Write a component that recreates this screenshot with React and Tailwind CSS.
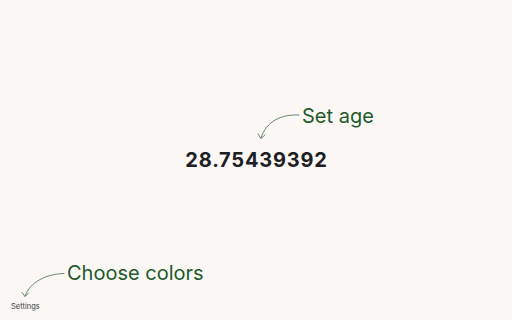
export default function App() {
  return (
    <div
      className="relative w-[512px] h-[320px] overflow-hidden bg-[#faf7f4] flex items-center justify-center"
      style={{ fontFamily: "Inter, 'Noto Sans', sans-serif" }}
    >
      <div className="text-[20px] leading-none font-bold tracking-[0.04em] text-[#1d2125] pl-[1px]">
        28.75439392
      </div>

      {/* annotation arrows */}
      <svg className="absolute inset-0 pointer-events-none" width="512" height="320" fill="none">
        <g stroke="#5b7a62" strokeWidth="0.9" strokeLinecap="round">
          <path d="M299 115 C 282 114, 266 121, 261 138" />
          <path d="M258 134 L261 138.5 L265 135" />
          <path d="M64 273.5 C 46 274, 30 282, 25 296" />
          <path d="M22 292.5 L25 296.5 L28.5 293" />
        </g>
      </svg>

      <div className="absolute left-[302px] top-[104px] text-[20px] leading-6 text-[#1e5a2c]">
        Set age
      </div>
      <div className="absolute left-[67px] top-[261px] text-[20px] leading-6 text-[#1e5a2c]">
        Choose colors
      </div>
      <div className="absolute left-[11px] top-[301px] text-[7.5px] leading-3 text-[#3a3d40]">
        Settings
      </div>
    </div>
  );
}
